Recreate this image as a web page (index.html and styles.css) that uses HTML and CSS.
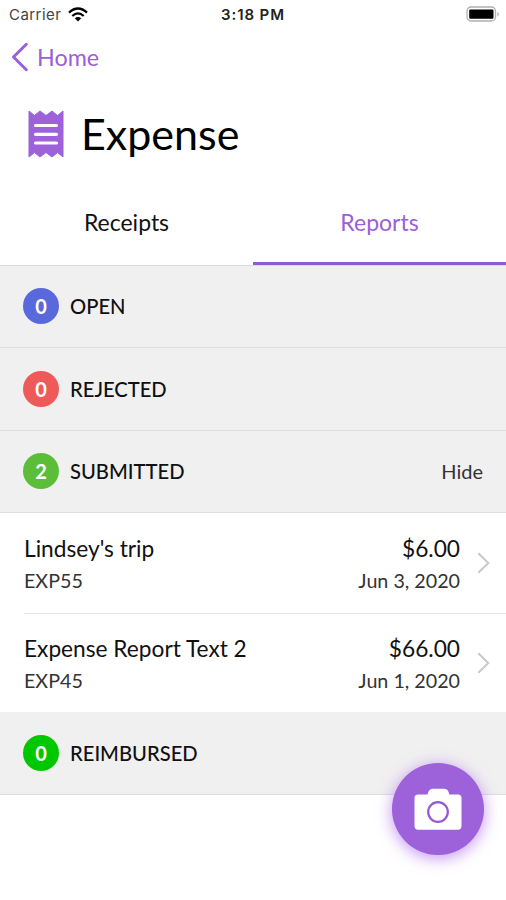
FILE: index.html
```html
<!DOCTYPE html>
<html lang="en">
<head>
    <meta charset="UTF-8">
    <meta name="viewport" content="width=device-width, initial-scale=1.0">
    <title>Expense</title>
    <link rel="stylesheet" href="styles.css">
</head>
<body>
    <div class="status-bar">
        <div class="carrier">
            <span>Carrier</span>
            <svg class="wifi" viewBox="0 0 20 15" width="20" height="15" fill="none" stroke="#000" stroke-width="2.3">
                <path d="M1 5.6 Q10 -2.6 19 5.6"/>
                <path d="M4.3 9 Q10 3.8 15.7 9"/>
                <path d="M10 14.4 L6.8 11.3 Q10 8.8 13.2 11.3 Z" fill="#000" stroke="none"/>
            </svg>
        </div>
        <span class="time">3:18 PM</span>
        <svg class="battery" viewBox="0 0 34 16" width="34" height="16">
            <rect x="1" y="1" width="28.5" height="14" rx="4" fill="#fff" stroke="#b0b0b0" stroke-width="1.3"/>
            <rect x="3.2" y="3.4" width="24.3" height="9.4" rx="1" fill="#000"/>
            <path d="M31.5 6 Q34 8 31.5 10.5 Z" fill="#999"/>
        </svg>
    </div>

    <a class="back" href="#">
        <svg viewBox="0 0 18 30" width="18" height="30" fill="none" stroke="#9b5fd9" stroke-width="3" stroke-linecap="round" stroke-linejoin="round">
            <path d="M15.3 2.3 L2.5 15 L15.3 27.7"/>
        </svg>
        <span>Home</span>
    </a>

    <div class="title">
        <svg viewBox="0 0 36 48" width="36" height="48">
            <path d="M1 1 L6.5 5.5 L12 1 L18 5.5 L24 1 L29.5 5.5 L35 1 V47 L29.5 42.5 L24 47 L18 42.5 L12 47 L6.5 42.5 L1 47 Z" fill="#9d61da" stroke="#9d61da" stroke-width="1"/>
            <path d="M7.5 15.5 H28.5 M7.5 24.3 H28.5 M7.5 33 H28.5" stroke="#fff" stroke-width="3.2" stroke-linecap="round"/>
        </svg>
        <h1>Expense</h1>
    </div>

    <div class="tabs">
        <div class="tab">Receipts</div>
        <div class="tab active">Reports</div>
    </div>

    <div class="section">
        <span class="badge blue">0</span>
        <span class="label">OPEN</span>
    </div>
    <div class="section">
        <span class="badge red">0</span>
        <span class="label">REJECTED</span>
    </div>
    <div class="section">
        <span class="badge green">2</span>
        <span class="label">SUBMITTED</span>
        <span class="hide">Hide</span>
    </div>

    <div class="reports">
        <div class="report">
            <div class="info">
                <p class="main">Lindsey's trip</p>
                <p class="sub">EXP55</p>
            </div>
            <div class="info amount">
                <p class="main">$6.00</p>
                <p class="sub">Jun 3, 2020</p>
            </div>
            <svg class="arrow" viewBox="0 0 13 22" width="13" height="22">
                <path d="M1.3 1.3 L11.3 11 L1.3 20.7"/>
            </svg>
        </div>
        <div class="report">
            <div class="info">
                <p class="main">Expense Report Text 2</p>
                <p class="sub">EXP45</p>
            </div>
            <div class="info amount">
                <p class="main">$66.00</p>
                <p class="sub">Jun 1, 2020</p>
            </div>
            <svg class="arrow" viewBox="0 0 13 22" width="13" height="22">
                <path d="M1.3 1.3 L11.3 11 L1.3 20.7"/>
            </svg>
        </div>
    </div>

    <div class="section">
        <span class="badge lime">0</span>
        <span class="label">REIMBURSED</span>
    </div>

    <button class="camera" aria-label="Camera">
        <svg viewBox="0 0 48 42" width="48" height="42">
            <path d="M4 6.5 H13.5 Q14.5 1 18.5 0.7 H30.5 Q34.5 1 35.3 6.5 H44 Q47.5 6.5 47.5 10 V38 Q47.5 41.7 44 41.7 H4 Q0.5 41.7 0.5 38 V10 Q0.5 6.5 4 6.5 Z" fill="#fff"/>
            <circle cx="24" cy="24" r="9.8" fill="#fff" stroke="#9558d3" stroke-width="2.2"/>
        </svg>
    </button>
</body>
</html>
```

FILE: styles.css
```css
* {
    box-sizing: border-box;
    margin: 0;
    padding: 0;
}
body {
    font-family: Lato, "Liberation Sans", sans-serif;
    background: #fff;
    color: #111;
    height: 900px;
    overflow: hidden;
}
.status-bar {
    display: grid;
    grid-template-columns: 1fr auto 1fr;
    align-items: center;
    height: 28px;
    padding: 0 6px 0 9px;
    font-family: Inter, sans-serif;
    font-size: 15px;
}
.carrier {
    display: flex;
    align-items: center;
    gap: 7px;
    color: #444;
    letter-spacing: 0.45px;
}
.time {
    margin-right: 3px;
    font-weight: 600;
    letter-spacing: 0.9px;
    color: #222;
}
.battery {
    justify-self: end;
}
.back {
    display: flex;
    align-items: center;
    gap: 8px;
    height: 58px;
    padding: 0 0 0 11px;
    color: #9b5fd9;
    font-size: 23.3px;
    text-decoration: none;
}
.back span {
    padding-bottom: 1px;
}
.title {
    display: flex;
    align-items: center;
    gap: 17px;
    height: 96px;
    padding-left: 28px;
}
h1 {
    padding-bottom: 2px;
    font-size: 43px;
    font-weight: 400;
    color: #000;
}
.tabs {
    display: flex;
    height: 83.5px;
    border-bottom: 1px solid #dcdcdc;
}
.tab {
    flex: 1;
    text-align: center;
    font-size: 23px;
    line-height: 80px;
}
.active {
    height: 82.5px;
    color: #9b5fd9;
    border-bottom: 3px solid #9558d3;
}
.section {
    display: flex;
    align-items: center;
    height: 82.6px;
    padding: 0 23px;
    background: #f0f0f0;
    border-bottom: 1.5px solid #dedede;
}
.badge {
    width: 36px;
    height: 36px;
    margin-right: 11px;
    border-radius: 50%;
    color: #fff;
    font-size: 20px;
    font-weight: bold;
    line-height: 36px;
    text-align: center;
}
.blue {
    background: #5968dc;
}
.red {
    background: #ee5a5a;
}
.green {
    background: #5cbd38;
}
.lime {
    background: #00c800;
}
.label {
    font-size: 20.2px;
    font-weight: 500;
}
.hide {
    margin-left: auto;
    font-size: 20px;
    color: #333;
}
.reports {
    padding-left: 24px;
}
.report {
    display: flex;
    align-items: center;
    height: 99.5px;
    padding-right: 16px;
}
.report + .report {
    border-top: 1.5px solid #e4e4e4;
}
.main {
    font-size: 22.7px;
    line-height: 33px;
}
.sub {
    font-size: 19.7px;
    line-height: 32px;
    color: #333;
}
.info {
    padding-top: 2px;
}
.amount {
    margin-left: auto;
    margin-right: 17px;
    text-align: right;
}
.arrow {
    fill: none;
    stroke: #c9c9c9;
    stroke-width: 2;
}
/* floating camera button */
.camera {
    position: fixed;
    right: 22px;
    bottom: 45px;
    display: flex;
    align-items: center;
    justify-content: center;
    width: 92px;
    height: 92px;
    border: none;
    border-radius: 50%;
    background: #9d61da;
    box-shadow: 0 3px 16px rgba(157, 75, 235, 0.6);
}
```
